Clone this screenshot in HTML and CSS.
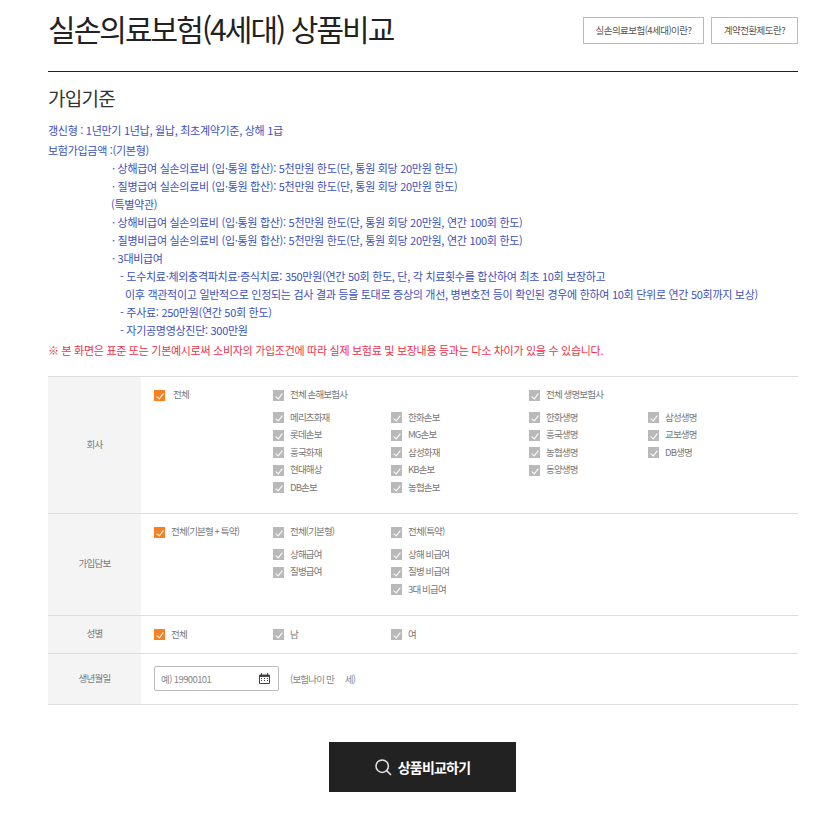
FILE: index.html
```html
<!DOCTYPE html>
<html lang="ko">

<head>
    <meta charset="UTF-8" />
    <title>실손의료보험(4세대) 상품비교</title>
    <link rel="stylesheet" href="styles.css">
</head>

<body>
    <div class="page">
        <!-- Title -->
        <header class="page-head">
            <h1>실손의료보험(4세대) 상품비교</h1>
            <div class="head-btns">
                <a href="#" class="head-btn">실손의료보험(<em>4세대</em>)이란?</a>
                <a href="#" class="head-btn">계약전환제도란?</a>
            </div>
        </header>

        <!-- Notice -->
        <section class="criteria">
            <h2>가입기준</h2>
            <p class="first">갱신형 : 1년만기 1년납, 월납, 최초계약기준, 상해 1급</p>
            <p class="amount">보험가입금액 :(기본형)</p>
            <p class="indent">· 상해급여 실손의료비 (입·통원 합산): 5천만원 한도(단, 통원 회당 20만원 한도)</p>
            <p class="indent">· 질병급여 실손의료비 (입·통원 합산): 5천만원 한도(단, 통원 회당 20만원 한도)</p>
            <p class="indent-plain">(특별약관)</p>
            <p class="indent">· 상해비급여 실손의료비 (입·통원 합산): 5천만원 한도(단, 통원 회당 20만원, 연간 100회 한도)</p>
            <p class="indent">· 질병비급여 실손의료비 (입·통원 합산): 5천만원 한도(단, 통원 회당 20만원, 연간 100회 한도)</p>
            <p class="indent">· 3대비급여</p>
            <p class="indent-sub">- 도수치료·체외충격파치료·증식치료: 350만원(연간 50회 한도, 단, 각 치료횟수를 합산하여 최초 10회 보장하고</p>
            <p class="indent-cont">이후 객관적이고 일반적으로 인정되는 검사 결과 등을 토대로 증상의 개선, 병변호전 등이 확인된 경우에 한하여 10회 단위로 연간 50회까지 보상)</p>
            <p class="indent-sub">- 주사료: 250만원(연간 50회 한도)</p>
            <p class="indent-sub">- 자기공명영상진단: 300만원</p>
            <p class="warn">※ 본 화면은 표준 또는 기본예시로써 소비자의 가입조건에 따라 실제 보험료 및 보장내용 등과는 다소 차이가 있을 수 있습니다.</p>
        </section>

        <!-- Search form -->
        <div class="form-table">
            <div class="form-row">
                <div class="form-label">회사</div>
                <div class="form-cell company">
                    <div class="check-grid head-row">
                        <label class="check on"><i></i>전체</label>
                        <label class="check"><i></i>전체 손해보험사</label>
                        <span></span>
                        <label class="check"><i></i>전체 생명보험사</label>
                    </div>
                    <div class="check-grid">
                        <span></span>
                        <label class="check"><i></i>메리츠화재</label>
                        <label class="check"><i></i>한화손보</label>
                        <label class="check"><i></i>한화생명</label>
                        <label class="check"><i></i>삼성생명</label>

                        <span></span>
                        <label class="check"><i></i>롯데손보</label>
                        <label class="check"><i></i>MG손보</label>
                        <label class="check"><i></i>흥국생명</label>
                        <label class="check"><i></i>교보생명</label>

                        <span></span>
                        <label class="check"><i></i>흥국화재</label>
                        <label class="check"><i></i>삼성화재</label>
                        <label class="check"><i></i>농협생명</label>
                        <label class="check"><i></i>DB생명</label>

                        <span></span>
                        <label class="check"><i></i>현대해상</label>
                        <label class="check"><i></i>KB손보</label>
                        <label class="check"><i></i>동양생명</label>
                        <span></span>

                        <span></span>
                        <label class="check"><i></i>DB손보</label>
                        <label class="check"><i></i>농협손보</label>
                    </div>
                </div>
            </div>

            <div class="form-row">
                <div class="form-label">가입담보</div>
                <div class="form-cell coverage">
                    <div class="check-grid head-row">
                        <label class="check on tight"><i></i>전체(기본형 + 특약)</label>
                        <label class="check"><i></i>전체(기본형)</label>
                        <label class="check"><i></i>전체(특약)</label>
                    </div>
                    <div class="check-grid">
                        <span></span>
                        <label class="check"><i></i>상해급여</label>
                        <label class="check"><i></i>상해 비급여</label>
                        <span></span><span></span>

                        <span></span>
                        <label class="check"><i></i>질병급여</label>
                        <label class="check"><i></i>질병 비급여</label>
                        <span></span><span></span>

                        <span></span>
                        <span></span>
                        <label class="check"><i></i>3대 비급여</label>
                    </div>
                </div>
            </div>

            <div class="form-row">
                <div class="form-label">성별</div>
                <div class="form-cell gender">
                    <div class="check-grid">
                        <label class="check on tight"><i></i>전체</label>
                        <label class="check"><i></i>남</label>
                        <label class="check"><i></i>여</label>
                    </div>
                </div>
            </div>

            <div class="form-row">
                <div class="form-label">생년월일</div>
                <div class="form-cell birth">
                    <div class="date-box">
                        <input type="text" placeholder="예) 19900101" />
                        <svg width="11" height="11" viewBox="0 0 11 11">
                            <path d="M0.5 2h10v8.5h-10z" fill="#fff" stroke="#444" />
                            <path d="M0 2h11v2H0z" fill="#444" />
                            <path d="M2.5 0v2.5M8.5 0v2.5" stroke="#444" />
                            <path d="M2 5.5h1M5 5.5h1M8 5.5h1M2 7.5h1M5 7.5h1M8 7.5h1" stroke="#444" />
                        </svg>
                    </div>
                    <span class="age">(보험나이 만 <b></b> 세)</span>
                </div>
            </div>
        </div>

        <div class="btn-wrap">
            <button class="compare-btn">
                <svg width="17" height="17" viewBox="0 0 17 17" fill="none" stroke="#e6e6e6">
                    <circle cx="7.2" cy="7.2" r="6.2" stroke-width="1.5" />
                    <path d="M11.6 11.6l4.4 4.4" stroke-width="1.5" />
                </svg>
                상품비교하기
            </button>
        </div>
    </div>
</body>

</html>
```

FILE: styles.css
```css
* {
    margin: 0;
    padding: 0;
    box-sizing: border-box;
    font-family: "Noto Sans CJK KR", "Noto Sans", sans-serif;
}

body {
    background-color: #ffffff;
    color: #333;
}

.page {
    width: 750px;
    margin-left: 48px;
}

/* Title */
.page-head {
    display: flex;
    justify-content: space-between;
    align-items: flex-start;
    height: 72px;
    border-bottom: 1px solid #222;
}

.page-head h1 {
    font-size: 30px;
    font-weight: 400;
    line-height: 40px;
    letter-spacing: -1.95px;
    color: #222;
    margin-top: 8px;
}

.head-btns {
    display: flex;
    gap: 7px;
    margin-top: 17px;
}

.head-btn {
    display: flex;
    align-items: center;
    justify-content: center;
    height: 27px;
    padding-bottom: 1px;
    border: 1px solid #bbb;
    font-size: 9.5px;
    letter-spacing: -0.55px;
    color: #555;
    text-decoration: none;
}

.head-btn:first-child {
    width: 121px;
}

.head-btn:last-child {
    width: 87px;
}

.head-btn em {
    font-style: normal;
    color: #555;
}

/* Notice */
.criteria {
    color: #3d50c0;
    font-size: 11px;
    line-height: 18px;
    letter-spacing: -0.29px;
}

.criteria h2 {
    font-size: 19px;
    font-weight: 400;
    line-height: 26px;
    letter-spacing: -0.7px;
    color: #333;
    margin-top: 13px;
}

.criteria .first {
    margin-top: 10px;
}

.criteria .amount {
    margin-top: 2px;
}

.indent {
    padding-left: 64px;
}

.indent-plain {
    padding-left: 63px;
}

.indent-sub {
    padding-left: 72px;
}

.indent-cont {
    padding-left: 77px;
}

.criteria .warn {
    color: #f0304a;
    margin-top: 2px;
}

/* Form table */
.form-table {
    margin-top: 17px;
    border-top: 1px solid #ddd;
}

.form-row {
    display: flex;
    border-bottom: 1px solid #ddd;
}

.form-label {
    display: flex;
    align-items: center;
    justify-content: center;
    width: 93px;
    flex-shrink: 0;
    padding-bottom: 3px;
    background-color: #f4f4f4;
    font-size: 9.5px;
    letter-spacing: -0.8px;
    color: #777;
}

.form-cell {
    flex: 1;
    padding-left: 13px;
}

.company {
    height: 136px;
    padding-top: 8px;
}

.coverage {
    height: 101px;
    padding-top: 8px;
}

.gender {
    height: 37px;
    padding-top: 9px;
}

.birth {
    display: flex;
    align-items: center;
    height: 50px;
    padding-bottom: 1px;
}

.check-grid {
    display: grid;
    grid-template-columns: 119px 118px 138px 119px 1fr;
    grid-auto-rows: 17.5px;
}

.head-row {
    margin-bottom: 5px;
    grid-auto-rows: 18px;
}

.check {
    display: flex;
    align-items: center;
    gap: 6px;
    font-size: 9.5px;
    letter-spacing: -0.85px;
    color: #777;
    white-space: nowrap;
}

.check i {
    position: relative;
    flex-shrink: 0;
    width: 11px;
    height: 11px;
    margin-top: 2px;
    background-color: #b9b9b9;
}

.check i::after {
    content: "";
    position: absolute;
    left: 3.5px;
    top: 2px;
    width: 3px;
    height: 6px;
    border-right: 1.2px solid #fff;
    border-bottom: 1.2px solid #fff;
    transform: rotate(38deg);
}

.check.on {
    gap: 8px;
}

.check.tight {
    gap: 6px;
}

.check.on i {
    background-color: #f98021;
}

/* Birth */
.date-box {
    display: flex;
    align-items: center;
    justify-content: space-between;
    width: 125px;
    height: 25px;
    border: 1px solid #bbb;
    border-radius: 2px;
    padding: 0 8px 0 6px;
}

.date-box input {
    width: 90px;
    border: none;
    outline: none;
    font-size: 9.5px;
    letter-spacing: -0.6px;
    color: #777;
}

.date-box input::placeholder {
    color: #888;
    opacity: 1;
}

.age {
    margin-left: 11px;
    font-size: 9.5px;
    letter-spacing: -0.8px;
    color: #888;
}

.age b {
    display: inline-block;
    width: 7px;
}

/* Button */
.btn-wrap {
    display: flex;
    justify-content: center;
    margin-top: 37px;
    padding-right: 1px;
}

.compare-btn {
    display: flex;
    align-items: center;
    justify-content: center;
    gap: 6px;
    width: 187px;
    height: 50px;
    background-color: #222;
    color: #fff;
    border: none;
    font-size: 14px;
    font-weight: 700;
    letter-spacing: -0.8px;
}
```
